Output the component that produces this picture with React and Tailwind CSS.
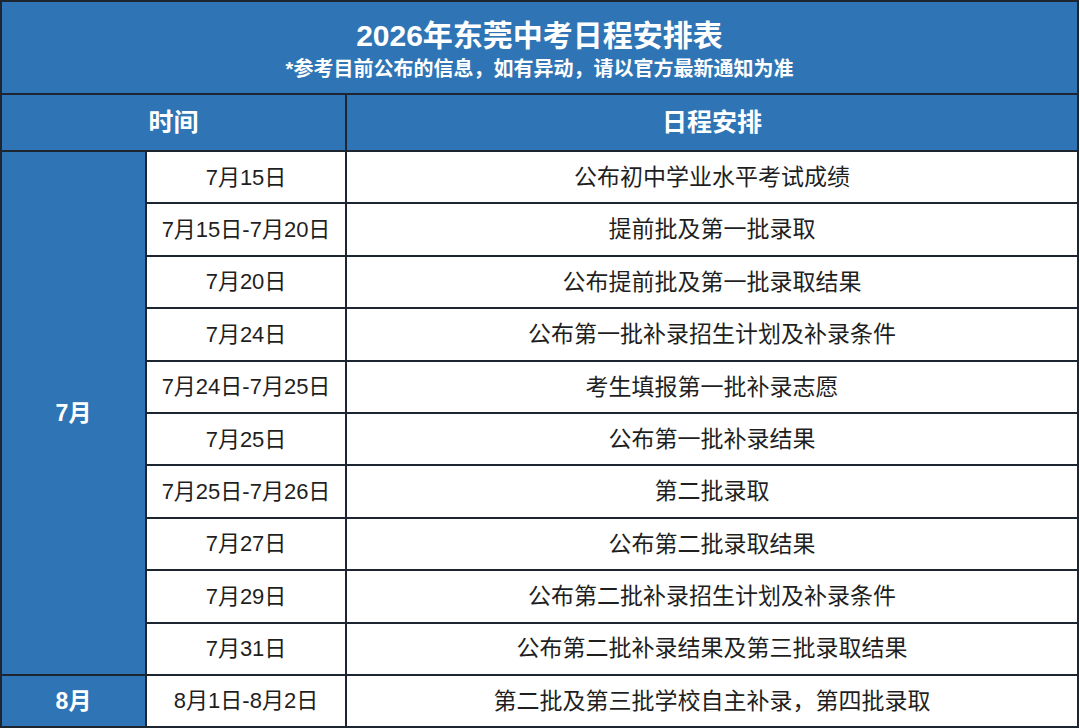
const ROWS_JULY = [
  ['7月15日', '公布初中学业水平考试成绩'],
  ['7月15日-7月20日', '提前批及第一批录取'],
  ['7月20日', '公布提前批及第一批录取结果'],
  ['7月24日', '公布第一批补录招生计划及补录条件'],
  ['7月24日-7月25日', '考生填报第一批补录志愿'],
  ['7月25日', '公布第一批补录结果'],
  ['7月25日-7月26日', '第二批录取'],
  ['7月27日', '公布第二批录取结果'],
  ['7月29日', '公布第二批补录招生计划及补录条件'],
  ['7月31日', '公布第二批补录结果及第三批录取结果'],
];

const font = { fontFamily: '"Liberation Sans", Arial, "Noto Sans CJK SC", sans-serif' };

export default function App() {
  return (
    <div className="w-[1080px] h-[728px] bg-white overflow-hidden" style={font}>
      <table className="w-[1079px] border-collapse table-fixed border-2 border-[#1c2530]">
        <colgroup>
          <col className="w-[145px]" />
          <col className="w-[200px]" />
          <col />
        </colgroup>
        <tbody>
          <tr className="h-[93px] bg-[#2f75b5] text-white">
            <td colSpan={3} className="border-2 border-[#1c2530] text-center align-middle pt-[4px]">
              <div className="text-[30px] font-bold leading-[38px]">2026年东莞中考日程安排表</div>
              <div className="text-[20px] font-bold leading-[28px]">*参考目前公布的信息，如有异动，请以官方最新通知为准</div>
            </td>
          </tr>
          <tr className="h-[57px] bg-[#2f75b5] text-white text-[25px] font-bold">
            <td colSpan={2} className="border-2 border-[#1c2530] text-center">时间</td>
            <td className="border-2 border-[#1c2530] text-center">日程安排</td>
          </tr>
          {ROWS_JULY.map(([d, t], i) => (
            <tr key={i} className="h-[52.4px] text-[#1f1f1f]">
              {i === 0 && (
                <td rowSpan={10} className="border-2 border-[#1c2530] bg-[#2f75b5] text-white font-bold text-[23px] text-center">7月</td>
              )}
              <td className="border-2 border-[#1c2530] text-center text-[22px]">{d}</td>
              <td className="border-2 border-[#1c2530] text-center text-[23px]">{t}</td>
            </tr>
          ))}
          <tr className="h-[52px] text-[#1f1f1f]">
            <td className="border-2 border-[#1c2530] bg-[#2f75b5] text-white font-bold text-[23px] text-center">8月</td>
            <td className="border-2 border-[#1c2530] text-center text-[22px]">8月1日-8月2日</td>
            <td className="border-2 border-[#1c2530] text-center text-[23px]">第二批及第三批学校自主补录，第四批录取</td>
          </tr>
        </tbody>
      </table>
    </div>
  );
}
